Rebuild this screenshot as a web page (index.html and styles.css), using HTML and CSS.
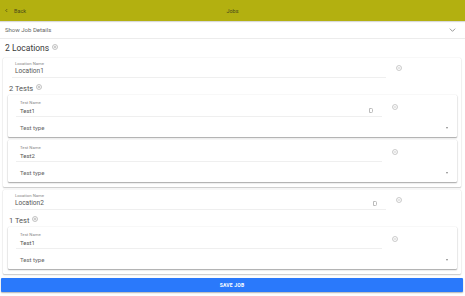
FILE: index.html
```html
<!DOCTYPE html>
<html lang="en">

<head>
    <meta charset="UTF-8">
    <meta name="viewport" content="width=device-width, initial-scale=1.0">
    <title>Jobs</title>
    <link rel="stylesheet" href="styles.css">
</head>

<body>
<header class="topbar">
    <div class="back">
        <svg class="back-arrow" viewBox="0 0 6 8" width="3" height="5"><path d="M4.5 1 L1.5 4 L4.5 7" fill="none" stroke="#3f3f14" stroke-width="1.2"/></svg>
        <span>Back</span>
    </div>
    <div class="title">Jobs</div>
    <div></div>
</header>

<div class="details">
    <span>Show Job Details</span>
    <svg viewBox="0 0 10 6" width="7" height="4"><path d="M1 1 L5 5 L9 1" fill="none" stroke="#666" stroke-width="1"/></svg>
</div>

<main class="content">
    <div class="count">2 Locations
        <svg class="plus" viewBox="0 0 12 12"><circle cx="6" cy="6" r="5" fill="none" stroke="#888" stroke-width="1"/><path d="M3.5 6 H8.5 M6 3.5 V8.5" stroke="#888" stroke-width="1"/></svg>
    </div>

    <section class="loc-card">
        <div class="field-row">
            <div class="field">
                <div class="lbl">Location Name</div>
                <div class="val">Location1</div>
            </div>
            <svg class="minus" viewBox="0 0 12 12"><circle cx="6" cy="6" r="5" fill="none" stroke="#999" stroke-width="1"/><path d="M3.5 6 H8.5" stroke="#999" stroke-width="1"/></svg>
        </div>
        <div class="count sub">2 Tests
            <svg class="plus" viewBox="0 0 12 12"><circle cx="6" cy="6" r="5" fill="none" stroke="#888" stroke-width="1"/><path d="M3.5 6 H8.5 M6 3.5 V8.5" stroke="#888" stroke-width="1"/></svg>
        </div>

        <div class="test-card">
            <div class="field-row">
                <div class="field">
                    <div class="lbl">Test Name</div>
                    <div class="val">Test1 <span class="tag"></span></div>
                </div>
                <svg class="minus" viewBox="0 0 12 12"><circle cx="6" cy="6" r="5" fill="none" stroke="#999" stroke-width="1"/><path d="M3.5 6 H8.5" stroke="#999" stroke-width="1"/></svg>
            </div>
            <div class="select">Test type <span class="caret"></span></div>
        </div>

        <div class="test-card">
            <div class="field-row">
                <div class="field">
                    <div class="lbl">Test Name</div>
                    <div class="val">Test2</div>
                </div>
                <svg class="minus" viewBox="0 0 12 12"><circle cx="6" cy="6" r="5" fill="none" stroke="#999" stroke-width="1"/><path d="M3.5 6 H8.5" stroke="#999" stroke-width="1"/></svg>
            </div>
            <div class="select">Test type <span class="caret"></span></div>
        </div>
    </section>

    <section class="loc-card">
        <div class="field-row">
            <div class="field">
                <div class="lbl">Location Name</div>
                <div class="val">Location2 <span class="tag"></span></div>
            </div>
            <svg class="minus" viewBox="0 0 12 12"><circle cx="6" cy="6" r="5" fill="none" stroke="#999" stroke-width="1"/><path d="M3.5 6 H8.5" stroke="#999" stroke-width="1"/></svg>
        </div>
        <div class="count sub">1 Test
            <svg class="plus" viewBox="0 0 12 12"><circle cx="6" cy="6" r="5" fill="none" stroke="#888" stroke-width="1"/><path d="M3.5 6 H8.5 M6 3.5 V8.5" stroke="#888" stroke-width="1"/></svg>
        </div>

        <div class="test-card">
            <div class="field-row">
                <div class="field">
                    <div class="lbl">Test Name</div>
                    <div class="val">Test1</div>
                </div>
                <svg class="minus" viewBox="0 0 12 12"><circle cx="6" cy="6" r="5" fill="none" stroke="#999" stroke-width="1"/><path d="M3.5 6 H8.5" stroke="#999" stroke-width="1"/></svg>
            </div>
            <div class="select">Test type <span class="caret"></span></div>
        </div>
    </section>
</main>

<button class="save" type="button">SAVE JOB</button>

</body>

</html>
```

FILE: styles.css
```css
body {
    margin: 0;
    width: 465px;
    height: 296px;
    overflow: hidden;
    background: #fff;
    font-family: Roboto, "Liberation Sans", sans-serif;
    color: #333;
}

.topbar {
    height: 21px;
    background-color: #b3b010;
    display: grid;
    grid-template-columns: 1fr auto 1fr;
    align-items: center;
    font-size: 5.5px;
    color: #4a4a1c;
    box-shadow: 0 1px 1px rgba(0, 0, 0, 0.15);
}

.back {
    display: flex;
    align-items: center;
    gap: 6px;
    padding-left: 5px;
}

.details {
    height: 17px;
    display: flex;
    align-items: center;
    justify-content: space-between;
    padding: 0 9px 0 5px;
    border-bottom: 1px solid #ececec;
    font-size: 6px;
    color: #666;
}

.count {
    height: 18px;
    display: flex;
    align-items: center;
    gap: 3px;
    padding-left: 5px;
    font-size: 8.5px;
    color: #3a3a3a;
}

.count.sub {
    height: 10px;
    margin-left: -3px;
    padding: 5px 0 2px 0;
    font-size: 7.5px;
    color: #555;
}

.plus {
    width: 6px;
    height: 6px;
    margin-top: -3px;
}

.minus {
    width: 6px;
    height: 6px;
    margin-left: 10px;
    margin-top: -3px;
}

.loc-card {
    margin: 1px 4px 3px 3px;
    padding: 3px 0 5px 9px;
    box-shadow: 0 0 1px rgba(0, 0, 0, 0.25), 0 1px 1.5px rgba(0, 0, 0, 0.2);
    border-radius: 1px;
}

.test-card {
    margin: 0 4px 3px -4px;
    padding-left: 8px;
    box-shadow: 0 0 1px rgba(0, 0, 0, 0.2), 0 1px 1.5px rgba(0, 0, 0, 0.35);
    border-radius: 1px;
}

.test-card:last-child {
    margin-bottom: 0;
}

.field-row {
    display: grid;
    grid-template-columns: 1fr 75px;
    align-items: center;
}

.test-card .field-row {
    padding-top: 5px;
}

.field {
    padding: 0 0 1px 3px;
    border-bottom: 1px solid #efefef;
}

.test-card .field {
    padding-left: 4px;
}

.lbl {
    font-size: 4.3px;
    line-height: 5px;
    color: #888;
}

.val {
    height: 10px;
    display: flex;
    align-items: center;
    justify-content: space-between;
    font-size: 6.5px;
    color: #555;
}

.test-card .val {
    font-size: 6px;
}

.tag {
    width: 2px;
    height: 3px;
    margin-right: 9px;
    border: 0.6px solid #bbb;
    border-left-width: 1px;
    border-radius: 0 1.5px 1.5px 0;
}

.select {
    height: 20px;
    display: flex;
    align-items: center;
    justify-content: space-between;
    padding: 0 9px 0 4px;
    font-size: 6px;
    color: #666;
}

.caret {
    width: 0;
    height: 0;
    margin-top: 1px;
    border-left: 1.8px solid transparent;
    border-right: 1.8px solid transparent;
    border-top: 2px solid #888;
}

.save {
    display: block;
    width: 462px;
    height: 14px;
    margin: 4px 0 0 1px;
    border: none;
    border-radius: 1px;
    background-color: #2a79fb;
    color: #fff;
    font-family: Roboto, "Liberation Sans", sans-serif;
    font-size: 5px;
    font-weight: 700;
    letter-spacing: 0.2px;
    box-shadow: 0 1px 1.5px rgba(0, 0, 0, 0.3);
}
```
